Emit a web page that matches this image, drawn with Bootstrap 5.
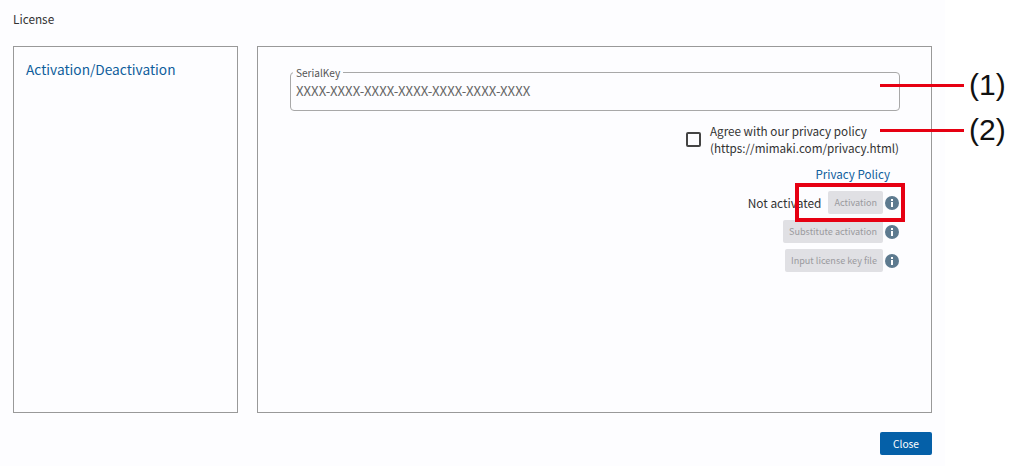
<!doctype html>
<html lang="en">
<head>
<meta charset="utf-8">
<title>License</title>
<link href="https://cdn.jsdelivr.net/npm/bootstrap@5.3.0/dist/css/bootstrap.min.css" rel="stylesheet">
<style>
html,body{height:466px;overflow:hidden;background:#fff}
body{font-family:"Noto Sans CJK JP","Noto Sans",sans-serif;font-size:13px;color:#333;position:relative}
.dlg{width:945px;height:466px;background:#fdfdff;padding:11px 13px 0}
.dlg-title{height:16px;line-height:16px;font-size:11.8px;color:#333;margin-bottom:19px}
.panes{height:367px;gap:19px}
.pane{border:1px solid #999}
.pane-left{width:225px;padding:12px 12px}
.pane-left a,.pp-link a{color:#0f5e9c;text-decoration:none}
.pane-left a{font-size:13.7px;line-height:20px;display:block}
.pane-right{width:675px;padding:25px 32px 0}
.serial{border:1.5px solid #a8a8a8;border-radius:4px;height:39px;position:relative;margin-right:-1px;padding:9px 5px 0;font-size:13.2px;line-height:18px;color:#666}
.serial-label{position:absolute;top:-7px;left:2px;background:#fdfdff;padding:0 3px;font-size:10.1px;line-height:13px;color:#555}
.agree{margin-top:11px}
.cb{width:15px;height:15px;border:2px solid #444;border-radius:2px;margin-right:9px}
.agree-text{font-size:11.7px;line-height:17px;color:#333;white-space:nowrap}
.pp-link{font-size:11.6px;line-height:17px;margin:10px 9px 0 0}
.act-row{height:23px;margin-bottom:6px;gap:2px}
.act-rows{margin-top:8px}
.status{font-size:11.9px;margin-right:5px;color:#333}
.btn-off{background:#e0e0e4;color:#9a9a9e;border:0;border-radius:2px;font-size:9.1px;height:23px;padding:0 6px;line-height:23px;white-space:nowrap}
.info{flex:none}
.foot{margin-top:19px}
.btn-close-x{background:#0560a8;color:#fff;border:0;border-radius:2px;width:52px;height:23px;font-size:10.2px;line-height:23px;padding:0}
.mark-line{position:absolute;background:#e60012;height:3px}
.mark-num{position:absolute;font-family:"Liberation Sans",sans-serif;font-size:30px;line-height:32px;color:#111}
.mark-box{position:absolute;left:795px;top:183px;width:110px;height:39px;border:4px solid #e60012}
</style>
</head>
<body>
<div class="dlg">
  <div class="dlg-title">License</div>
  <div class="d-flex panes">
    <div class="pane pane-left"><a href="#">Activation/Deactivation</a></div>
    <div class="pane pane-right">
      <div class="serial">
        <span class="serial-label">SerialKey</span>
        XXXX-XXXX-XXXX-XXXX-XXXX-XXXX-XXXX
      </div>
      <div class="d-flex justify-content-end align-items-center agree">
        <span class="cb"></span>
        <span class="agree-text">Agree with our privacy policy<br>(https://mimaki.com/privacy.html)</span>
      </div>
      <div class="text-end pp-link"><a href="#">Privacy Policy</a></div>
      <div class="act-rows">
        <div class="d-flex justify-content-end align-items-center act-row">
          <span class="status">Not activated</span>
          <button class="btn-off" type="button">Activation</button>
          <svg class="info" width="14" height="14" viewBox="0 0 14 14"><circle cx="7" cy="7" r="7" fill="#5d7a8f"/><rect x="6" y="6" width="2" height="5" fill="#fff"/><rect x="6" y="3" width="2" height="2" fill="#fff"/></svg>
        </div>
        <div class="d-flex justify-content-end align-items-center act-row">
          <button class="btn-off" type="button">Substitute activation</button>
          <svg class="info" width="14" height="14" viewBox="0 0 14 14"><circle cx="7" cy="7" r="7" fill="#5d7a8f"/><rect x="6" y="6" width="2" height="5" fill="#fff"/><rect x="6" y="3" width="2" height="2" fill="#fff"/></svg>
        </div>
        <div class="d-flex justify-content-end align-items-center act-row">
          <button class="btn-off" type="button">Input license key file</button>
          <svg class="info" width="14" height="14" viewBox="0 0 14 14"><circle cx="7" cy="7" r="7" fill="#5d7a8f"/><rect x="6" y="6" width="2" height="5" fill="#fff"/><rect x="6" y="3" width="2" height="2" fill="#fff"/></svg>
        </div>
      </div>
    </div>
  </div>
  <div class="d-flex justify-content-end foot"><button class="btn-close-x" type="button">Close</button></div>
</div>
<div class="mark-line" style="left:880px;top:84px;width:84px"></div>
<div class="mark-line" style="left:880px;top:129px;width:84px"></div>
<div class="mark-num" style="left:969px;top:69px">(1)</div>
<div class="mark-num" style="left:969px;top:114px">(2)</div>
<div class="mark-box"></div>
</body>
</html>
